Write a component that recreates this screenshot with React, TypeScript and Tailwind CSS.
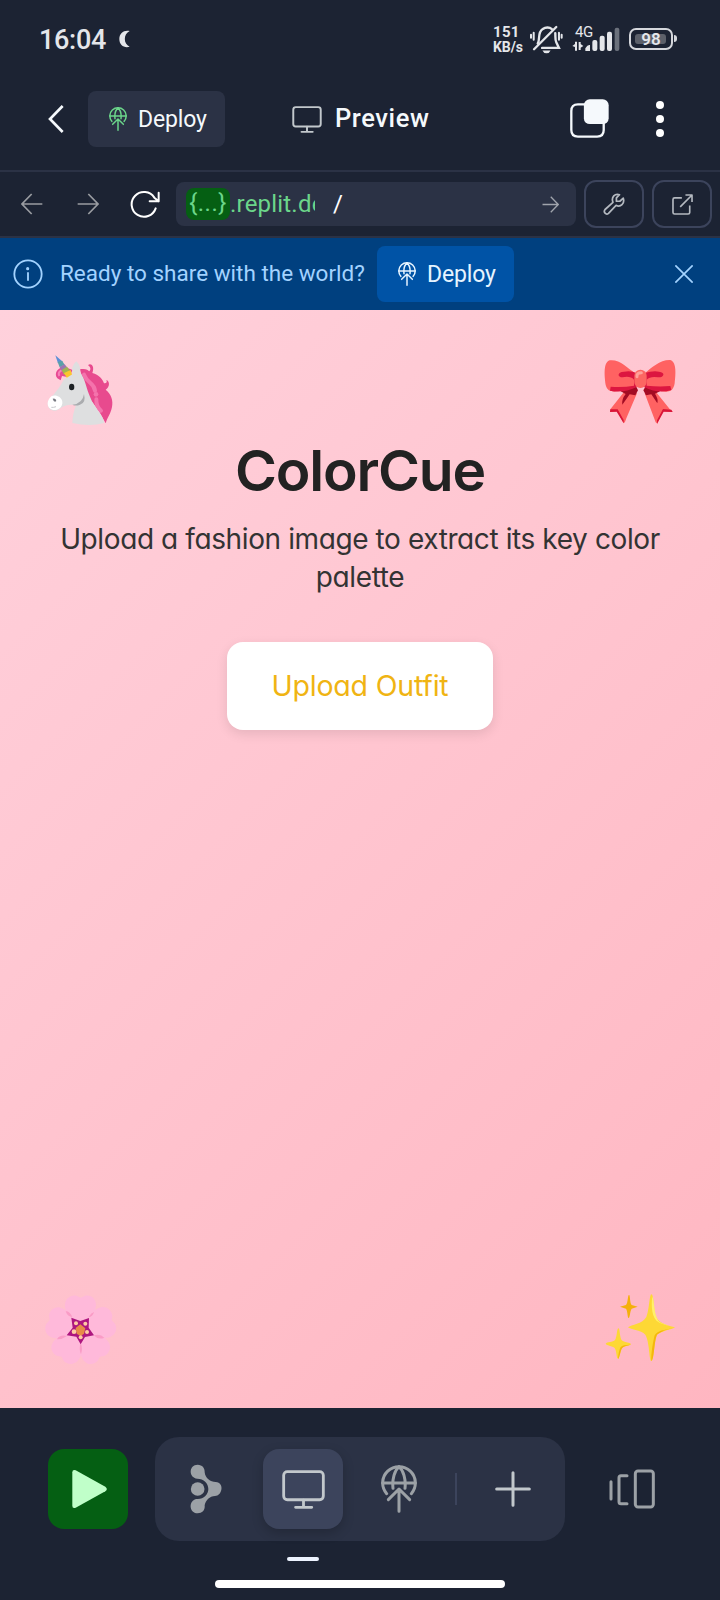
import React from 'react';

function DeployIcon({ className }: { className: string }) {
  return (
    <svg viewBox="0 0 108 144" className={className} fill="none" stroke="currentColor" strokeWidth="9" strokeLinecap="round" strokeLinejoin="round">
      <path d="M17 86A49 49 0 1 1 91 86" />
      <path d="M5 54H103M54 5C41 16 33 42 36 70M54 5C67 16 75 42 72 70" />
      <path d="M54 139V73M22 104L54 72L86 104" />
    </svg>
  );
}

function MonitorIcon({ className }: { className: string }) {
  return (
    <svg viewBox="0 0 130 118" className={className} fill="none" stroke="currentColor" strokeWidth="8.5" strokeLinecap="round" strokeLinejoin="round">
      <rect x="5" y="5" width="120" height="85" rx="11" />
      <path d="M65 91V113M41 113H90" />
    </svg>
  );
}

function ArrowIcon({ className }: { className: string }) {
  return (
    <svg viewBox="0 0 66 66" className={className} fill="none" stroke="currentColor" strokeWidth="5">
      <path d="M2 33H62M34 3L63 33L34 63" />
    </svg>
  );
}

function StatusBar() {
  return (
    <div className="flex h-[78px] items-center pl-[39px] pr-[47px] text-[#e4e6ea]">
      <span className="w-[67px] whitespace-nowrap pt-[2px] text-[27px] leading-none font-medium tracking-[-0.3px]">16:04</span>
      <svg viewBox="0 0 34 54" className="ml-[13px] h-[18px] w-[11px]" fill="currentColor">
        <path d="M33 2C16-2 1 8 1 27S16 56 33 51C23 46 18 38 18 27S23 7 33 2Z" />
      </svg>
      <div className="ml-auto w-[31px] whitespace-nowrap pt-[2px] text-[15px] leading-[15px] font-bold">
        <div className="tracking-[0.3px]">151</div>
        <div className="text-[14px] tracking-[-0.1px]">KB/s</div>
      </div>
      <svg viewBox="0 0 98 86" className="ml-[6px] h-[29px] w-[33px]" fill="none" stroke="currentColor" strokeWidth="7" strokeLinecap="round">
        <path d="M12 72L78 6" />
        <path d="M23 55C31 44 21 22 38 12C46 6 58 6 65 12M75 24C76 35 74 43 78 51L86 68H36" />
        <path d="M11 23V44M3 29V38M86 23V44M94 29V38" strokeWidth="6" />
        <path d="M37 76H61Q58 84 49 84T37 76Z" fill="currentColor" stroke="none" />
      </svg>
      <div className="relative ml-[9px] h-[28px] w-[48px]">
        <span className="absolute top-[-1px] left-[3px] text-[15px] leading-[16px] tracking-[-0.5px]">4G</span>
        <svg viewBox="0 0 144 84" className="h-[28px] w-[48px]" fill="currentColor">
          <rect x="128" y="8" width="14" height="70" rx="6" opacity=".4" />
          <rect x="105" y="20" width="15" height="58" rx="6" />
          <rect x="83" y="32" width="15" height="46" rx="6" />
          <rect x="61" y="45" width="15" height="33" rx="6" />
          <path d="M40 70Q47 58 54 60V78H40ZM1 63L9 57V50H15V77H9V66ZM20 51H26V57L34 63L26 68V75H20Z" />
        </svg>
      </div>
      <div className="relative ml-[9px] flex h-[22px] w-[44px] items-center justify-center rounded-[7px] border-2 border-[#d5d7dc]">
        <div className="absolute top-[4px] left-[4px] h-[10px] w-[31px] rounded-[3px] bg-[#5c606a]" />
        <span className="relative pt-px text-[17px] leading-none font-semibold">98</span>
        <div className="absolute top-[5px] -right-[6px] h-[7px] w-[3px] rounded-r bg-[#d5d7dc]" />
      </div>
    </div>
  );
}

function Header() {
  return (
    <div className="flex h-[94px] items-start border-b-2 border-[#2b3245] pt-[13px] text-[#f5f9fc]">
      <svg viewBox="0 0 48 84" className="mt-[14px] ml-12 h-[28px] w-[16px]" fill="none" stroke="currentColor" strokeWidth="8">
        <path d="M44 3L6 42L44 81" />
      </svg>
      <div className="ml-6 flex h-14 w-[137px] items-center rounded-lg bg-[#2b3245] pl-[21px]">
        <DeployIcon className="h-[24px] w-[18px] text-[#6bd68a]" />
        <span className="ml-[11px] text-[23px] leading-none tracking-[-0.15px]">Deploy</span>
      </div>
      <MonitorIcon className="mt-[15px] ml-[67px] h-[27px] w-[30px] text-[#c2c8cc]" />
      <span className="mt-[15px] ml-[13px] w-[94px] text-[25.5px] leading-[24px] font-medium tracking-[0.6px] whitespace-nowrap">Preview</span>
      <svg viewBox="0 0 118 118" className="mt-[8px] ml-[141px] h-[39px] w-[39px]" fill="none" stroke="currentColor" strokeWidth="7">
        <path d="M46 16H24Q4 16 4 36V94Q4 114 24 114H82Q102 114 102 94V70" />
        <rect x="42" y="1" width="75" height="75" rx="18" fill="currentColor" stroke="none" />
      </svg>
      <div className="mt-[10px] ml-[47px] flex flex-col gap-[6.5px]">
        <i className="size-[7.5px] rounded-full bg-white" />
        <i className="size-[7.5px] rounded-full bg-white" />
        <i className="size-[7.5px] rounded-full bg-white" />
      </div>
    </div>
  );
}

function AddressBar() {
  return (
    <div className="flex h-[66px] items-center border-b-2 border-[#2b3245] pr-2 pl-[21px]">
      <ArrowIcon className="size-[22px] rotate-180 text-[#999ca1]" />
      <ArrowIcon className="ml-[34px] size-[22px] text-[#999ca1]" />
      <svg viewBox="0 0 90 84" className="ml-[31px] h-[28px] w-[30px] text-white" fill="none" stroke="currentColor" strokeWidth="6" strokeLinecap="round" strokeLinejoin="round">
        <path d="M77 55A37 37 0 1 1 73 23L86 34M86 8V34H59" />
      </svg>
      <div className="ml-[16px] flex h-11 w-[400px] items-center rounded-lg bg-[#2b3245] pr-[17px] pl-[10px] text-[24px] leading-none">
        <span className="flex h-8 w-11 items-center justify-center rounded-lg bg-[#055f13] pb-[3px] tracking-[0.5px] text-[#6bd68a]">{'{...}'}</span>
        <span className="w-[85px] overflow-hidden py-1 leading-[28px] tracking-[0.2px] whitespace-nowrap text-[#6bd68a]">.replit.dev</span>
        <span className="ml-[18px] text-white">/</span>
        <ArrowIcon className="ml-auto size-[17px] text-[#a0a4ac]" />
      </div>
      <div className="ml-2 flex h-12 w-[60px] items-center justify-center rounded-xl border-2 border-[#3c445c] text-[#b4b9c0]">
        <svg viewBox="0 0 64 64" className="size-[22px]" fill="none" stroke="currentColor" strokeWidth="5" strokeLinejoin="round">
          <path d="M48 5L39 14V24H49L59 15C64 31 51 42 38 36L16 59C9 65 0 56 6 48L29 27C23 12 35 0 48 5Z" />
        </svg>
      </div>
      <div className="ml-2 flex h-12 w-[60px] items-center justify-center rounded-xl border-2 border-[#3c445c] text-[#b4b9c0]">
        <svg viewBox="0 0 64 64" className="size-[21px]" fill="none" stroke="currentColor" strokeWidth="5" strokeLinejoin="round">
          <path d="M30 12H8Q3 12 3 17V56Q3 61 8 61H49Q54 61 54 56V35M25 39L61 3M41 3H61V24" />
        </svg>
      </div>
    </div>
  );
}

function Banner() {
  return (
    <div className="flex h-[72px] items-center bg-[#00407f] text-[#a3d3ff]">
      <svg viewBox="0 0 90 90" className="ml-[13px] size-[30px]" fill="none" stroke="currentColor" strokeWidth="5.5" strokeLinecap="round">
        <circle cx="45" cy="45" r="41" />
        <path d="M45 42V63" />
        <circle cx="44" cy="29" r="2" fill="currentColor" />
      </svg>
      <span className="ml-[17px] w-[317px] pb-px text-[22.5px] leading-none whitespace-nowrap">Ready to share with the world?</span>
      <div className="flex h-14 w-[137px] items-center rounded-lg bg-[#0053a6] pl-[21px] text-[#e6f4ff]">
        <DeployIcon className="h-[24px] w-[18px]" />
        <span className="ml-[11px] text-[23px] leading-none tracking-[-0.15px]">Deploy</span>
      </div>
      <svg viewBox="0 0 54 54" className="mr-[27px] ml-auto size-[18px]" stroke="currentColor" strokeWidth="5">
        <path d="M1 1L53 53M53 1L1 53" />
      </svg>
    </div>
  );
}

function Unicorn() {
  return (
    <svg viewBox="0 0 300 300" className="size-[100px]">
      <path d="M82 115C70 100 84 80 106 82L128 90L116 112L96 108L92 121Z" fill="#e84a94" />
      <path d="M88 108C82 96 94 88 106 91" fill="none" stroke="#f781b8" strokeWidth="6" />
      <path d="M76 46L84 70L99 66Z" fill="#5c8fd6" />
      <path d="M83 66L89 82L104 74L96 62Z" fill="#5a9fa9" />
      <path d="M89 81L96 94L113 84L104 73Z" fill="#9b76b0" />
      <path d="M95 90L102 104L121 94L111 80Z" fill="#a1b552" />
      <path d="M102 99L112 116L128 110L122 90Z" fill="#fbc62d" />
      <path d="M150 88C165 84 175 90 178 94C184 88 181 80 174 76C180 67 196 76 187 99C207 105 218 117 222 130C230 131 232 125 229 120C239 123 241 140 227 149C244 163 250 181 246 201C241 224 232 232 227 250L205 210L170 165Z" fill="#e84a8e" />
      <path d="M162 104C172 132 192 126 195 152M199 178C198 196 206 206 213 212" fill="none" stroke="#f473ac" strokeWidth="12" strokeLinecap="round" />
      <circle cx="198" cy="163" r="7" fill="#f473ac" />
      <path d="M101 119L127 103Q123 78 139 64Q153 77 150 97C166 117 169 147 180 170C193 205 221 224 222 249Q180 261 127 249Q128 220 138 196C116 192 104 197 91 205C81 216 53 216 53 189C56 173 82 159 101 119Z" fill="#dedfe0" />
      <path d="M64 169C74 162 94 168 97 185C99 200 84 212 69 210C48 206 49 181 64 169Z" fill="#fff" />
      <path d="M68 176Q78 173 79 183Q72 189 68 176Z" fill="#777981" />
      <path d="M64 202Q71 203 78 200" fill="none" stroke="#c5c6ca" strokeWidth="3" />
      <path d="M127 194Q158 191 162 162Q169 189 150 194Q137 199 127 194Z" fill="#aaacaf" />
      <ellipse cx="125" cy="141" rx="8" ry="10" fill="#1d2225" />
    </svg>
  );
}

function Bow() {
  return (
    <svg viewBox="0 0 300 300" className="size-[100px]">
      <path d="M102 156L61 208L60 216L82 214L101 250Q106 247 109 235L141 160Z M198 156L239 207L248 215L219 214L202 251L197 247L164 160Z" fill="#ff6262" />
      <path d="M61 208L83 208L101 240V250L80 215L60 216ZM244 209L219 207L201 241V251L221 215L248 216Z" fill="#d91438" />
      <path d="M92 154L138 139L144 151L136 166L119 163Q104 185 97 194Q94 178 107 162ZM210 154L167 139L160 151L168 166L184 163L202 190Q206 178 195 161Z" fill="#a30b23" />
      <path d="M137 101C113 84 88 57 59 61C40 67 43 105 47 135C53 157 68 155 89 153Q123 147 142 139ZM163 101C184 83 211 59 240 60C259 64 258 98 254 130C250 155 236 157 216 154Q180 149 161 139Z" fill="#ff6262" />
      <path d="M139 99Q123 91 102 95C80 96 82 112 98 112Q121 107 132 119V137Q98 143 62 140L60 152Q99 161 140 141ZM164 99Q188 92 207 95C228 97 222 113 204 112Q181 108 170 119L170 137Q207 141 241 138L244 150Q206 163 162 141Z" fill="#dc1640" />
      <rect x="133" y="89" width="37" height="55" rx="18" fill="#fc6662" />
      <path d="M141 110Q140 98 154 98" stroke="#ffa19a" strokeWidth="9" fill="none" strokeLinecap="round" />
    </svg>
  );
}

function Blossom() {
  return (
    <svg viewBox="0 0 300 300" className="size-[100px]">
      {[0, 72, 144, 216, 288].map((angle) => (
        <path key={angle} transform={`rotate(${angle} 152 151)`} d="M152 151C120 119 103 96 105 72C108 51 127 45 139 47L152 53L165 47C181 44 197 54 198 73C199 95 180 121 152 151Z" fill="#ffb9da" />
      ))}
      <path d="M107 94Q119 93 127 111Q113 111 107 94ZM192 96Q188 111 176 111Q184 98 192 96ZM81 178Q89 163 111 168Q95 179 81 178ZM191 166Q211 160 223 173Q205 181 191 166ZM152 188Q159 205 153 223Q146 207 152 188Z" fill="#fa9cc6" />
      <path d="M124 113L151 123L177 114L176 143L192 166L165 171L152 193L139 170L110 166L128 143Z" fill="#ad167f" />
      <path d="M151 133L166 145L162 161L152 168L140 161L137 144Z" fill="#e78b48" />
      <g fill="#ffcba3">
        <circle cx="138" cy="130" r="6" />
        <circle cx="166" cy="131" r="6" />
        <circle cx="132" cy="155" r="7" />
        <circle cx="171" cy="156" r="6" />
        <circle cx="152" cy="172" r="6" />
      </g>
    </svg>
  );
}

function Sparkles() {
  return (
    <svg viewBox="0 0 300 300" className="size-[100px]">
      <path d="M117 45C121 44 119 70 125 75L143 80L125 86C120 91 120 114 116 114C112 114 113 91 108 86L90 80L108 75C114 70 113 45 117 45Z" fill="#f4b00b" />
      <path d="M184 43C191 43 190 76 196 104C203 127 221 133 254 142C257 146 222 150 202 164C192 178 193 241 184 243C177 242 179 185 166 164C154 151 117 147 114 142C123 134 158 132 169 111C178 91 178 44 184 43ZM85 145C90 145 88 165 94 179C101 188 124 187 123 193C119 198 100 198 95 206C90 217 88 237 84 236C79 236 81 216 74 204C68 197 47 196 47 191C51 185 69 187 75 180C82 169 80 146 85 145Z" fill="#fdd835" />
      <path d="M254 143Q217 150 202 163C192 178 193 241 184 243C182 225 190 180 194 166C202 151 221 150 254 143ZM123 194C108 197 99 199 95 206C90 217 88 237 84 236Q86 212 92 201Q101 193 123 194Z" fill="#f4b60d" />
      <path d="M187 49C183 78 185 116 206 127C221 135 244 139 252 142Q216 132 206 124C191 104 194 67 187 49Z" fill="#fff06b" />
    </svg>
  );
}

function Preview() {
  return (
    <main className="relative flex h-[1098px] flex-col items-center bg-[linear-gradient(135deg,#ffd1dc,#ffb6c1)] pt-[129px] [font-family:Inter,Lato,sans-serif] [font-feature-settings:'cv11']">
      <div className="absolute top-[30px] left-[30px]"><Unicorn /></div>
      <div className="absolute top-[30px] left-[590px]"><Bow /></div>
      <div className="absolute top-[970px] left-[30px]"><Blossom /></div>
      <div className="absolute top-[970px] left-[590px]"><Sparkles /></div>
      <h1 className="text-[57px] leading-[64px] font-semibold tracking-[-1.2px] text-[#222]">ColorCue</h1>
      <p className="mt-[18px] w-[640px] text-center text-[28px] leading-[37.5px] tracking-[-0.4px] text-[#333]">
        Upload a fashion image to extract its key color<br />palette
      </p>
      <button className="mt-[46px] h-[88px] w-[266px] rounded-2xl bg-white text-[28.5px] tracking-[-0.2px] text-[#f0b413] shadow-[0_4px_12px_rgba(0,0,0,0.1)]">Upload Outfit</button>
    </main>
  );
}

function BottomBar() {
  return (
    <footer className="flex h-[192px] flex-col items-start pt-[29px]">
      <div className="flex items-center pl-12">
        <div className="flex size-20 items-center justify-center rounded-2xl bg-[#055f13]">
          <svg viewBox="0 0 240 240" className="size-20" fill="#c0ffc9">
            <path d="M73 70Q73 61 83 64L172 113Q181 120 172 127L83 176Q73 180 73 170Z" />
          </svg>
        </div>
        <nav className="ml-[27px] flex h-[104px] w-[410px] items-center gap-4 rounded-3xl bg-[#2b3245] px-3">
          <svg viewBox="0 0 240 240" className="size-20 text-[#9ca1a6]" fill="currentColor">
            <circle cx="92" cy="120" r="20.5" />
            <path d="M92 47C106 47 114 58 113 70C115 88 130 99 146 99C174 101 165 141 144 141C128 141 116 154 113 169C115 184 105 193 92 193C65 193 64 153 89 150C109 152 124 136 124 120C124 103 110 89 91 89C64 86 65 47 92 47Z" />
          </svg>
          <div className="flex size-20 items-center justify-center rounded-2xl bg-[#3c445c] text-[#c2c8cc] shadow-[0_4px_12px_rgba(0,0,0,0.2)]">
            <MonitorIcon className="h-[39px] w-[43px]" />
          </div>
          <div className="flex size-20 items-center justify-center text-[#9ca1a6]"><DeployIcon className="h-[48px] w-[36px]" /></div>
          <div className="h-8 w-[2px] bg-[#3c445c]" />
          <svg viewBox="0 0 240 240" className="size-20 text-[#c2c8cc]" stroke="currentColor" strokeWidth="9" strokeLinecap="round">
            <path d="M120 71V169M71 120H169" />
          </svg>
        </nav>
        <svg viewBox="0 0 138 120" className="ml-[44px] h-[40px] w-[46px] text-[#9ca1a6]" fill="none" stroke="currentColor" strokeWidth="9" strokeLinecap="round" strokeLinejoin="round">
          <path d="M6 38V90M54 20H36Q30 20 30 26V98Q30 104 36 104H54" />
          <rect x="79" y="6" width="54" height="108" rx="8" />
        </svg>
      </div>
      <div className="mt-4 ml-[287px] h-1 w-8 rounded bg-[#edf3ff]" />
      <div className="mt-[19px] ml-[215px] h-2 w-[290px] rounded bg-white" />
    </footer>
  );
}

export default function App() {
  return (
    <div className="h-[1600px] w-[720px] overflow-hidden bg-[#1c2333] [font-family:Roboto,'Liberation_Sans',sans-serif]">
      <StatusBar />
      <Header />
      <AddressBar />
      <Banner />
      <Preview />
      <BottomBar />
    </div>
  );
}
